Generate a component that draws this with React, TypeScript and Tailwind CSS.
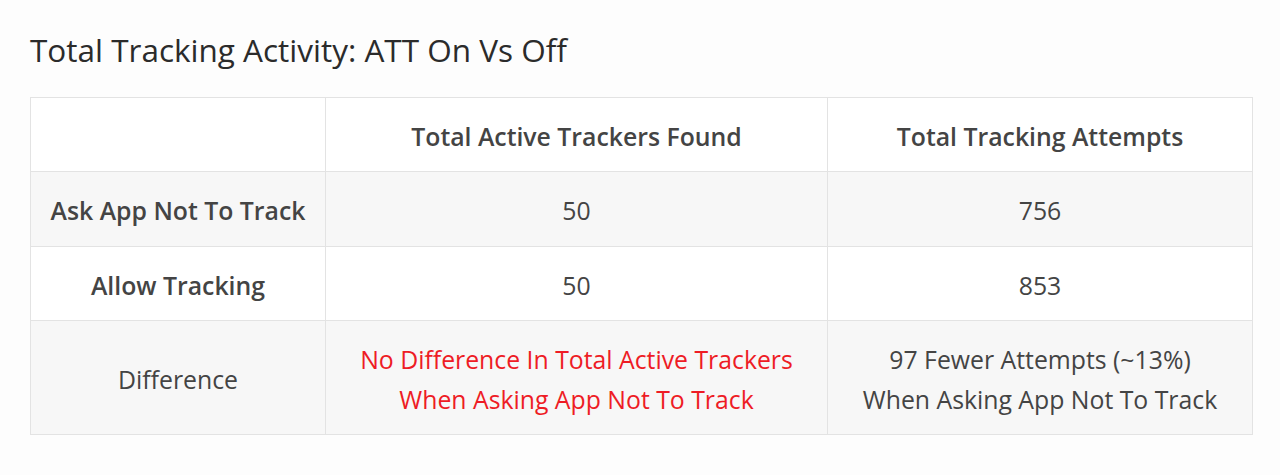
import React from "react";

const cell = "border border-[#e3e3e3] px-4 pt-[17.5px] pb-[15.5px] text-center align-middle leading-[40px]";

export default function App() {
  return (
    <div className="w-[1280px] h-[475px] bg-[#fdfdfd] overflow-hidden" style={{ fontFamily: '"Open Sans", "Noto Sans", sans-serif' }}>
      <div className="pl-[30px] pr-[27px] pt-[27px]">
        <h2 className="text-[31.5px] leading-[46px] text-[#2b2b2b] font-normal">Total Tracking Activity: ATT On Vs Off</h2>
        <table className="mt-[24px] w-[1223px] border-collapse text-[24.8px] text-[#444]">
          <colgroup>
            <col className="w-[295px]" />
            <col className="w-[502px]" />
            <col />
          </colgroup>
          <thead>
            <tr className="bg-white h-[74px]">
              <th className={cell}></th>
              <th className={`${cell} font-semibold`}>Total Active Trackers Found</th>
              <th className={`${cell} font-semibold`}>Total Tracking Attempts</th>
            </tr>
          </thead>
          <tbody>
            <tr className="bg-[#f7f7f7] h-[75px]">
              <td className={`${cell} font-semibold`}>Ask App Not To Track</td>
              <td className={cell}>50</td>
              <td className={cell}>756</td>
            </tr>
            <tr className="bg-white h-[74px]">
              <td className={`${cell} font-semibold`}>Allow Tracking</td>
              <td className={cell}>50</td>
              <td className={cell}>853</td>
            </tr>
            <tr className="bg-[#f7f7f7]">
              <td className={cell}>Difference</td>
              <td className={`${cell} text-[#ee1c25]`}>
                No Difference In Total Active Trackers
                <br />
                When Asking App Not To Track
              </td>
              <td className={cell}>
                97 Fewer Attempts (~13%)
                <br />
                When Asking App Not To Track
              </td>
            </tr>
          </tbody>
        </table>
      </div>
    </div>
  );
}
